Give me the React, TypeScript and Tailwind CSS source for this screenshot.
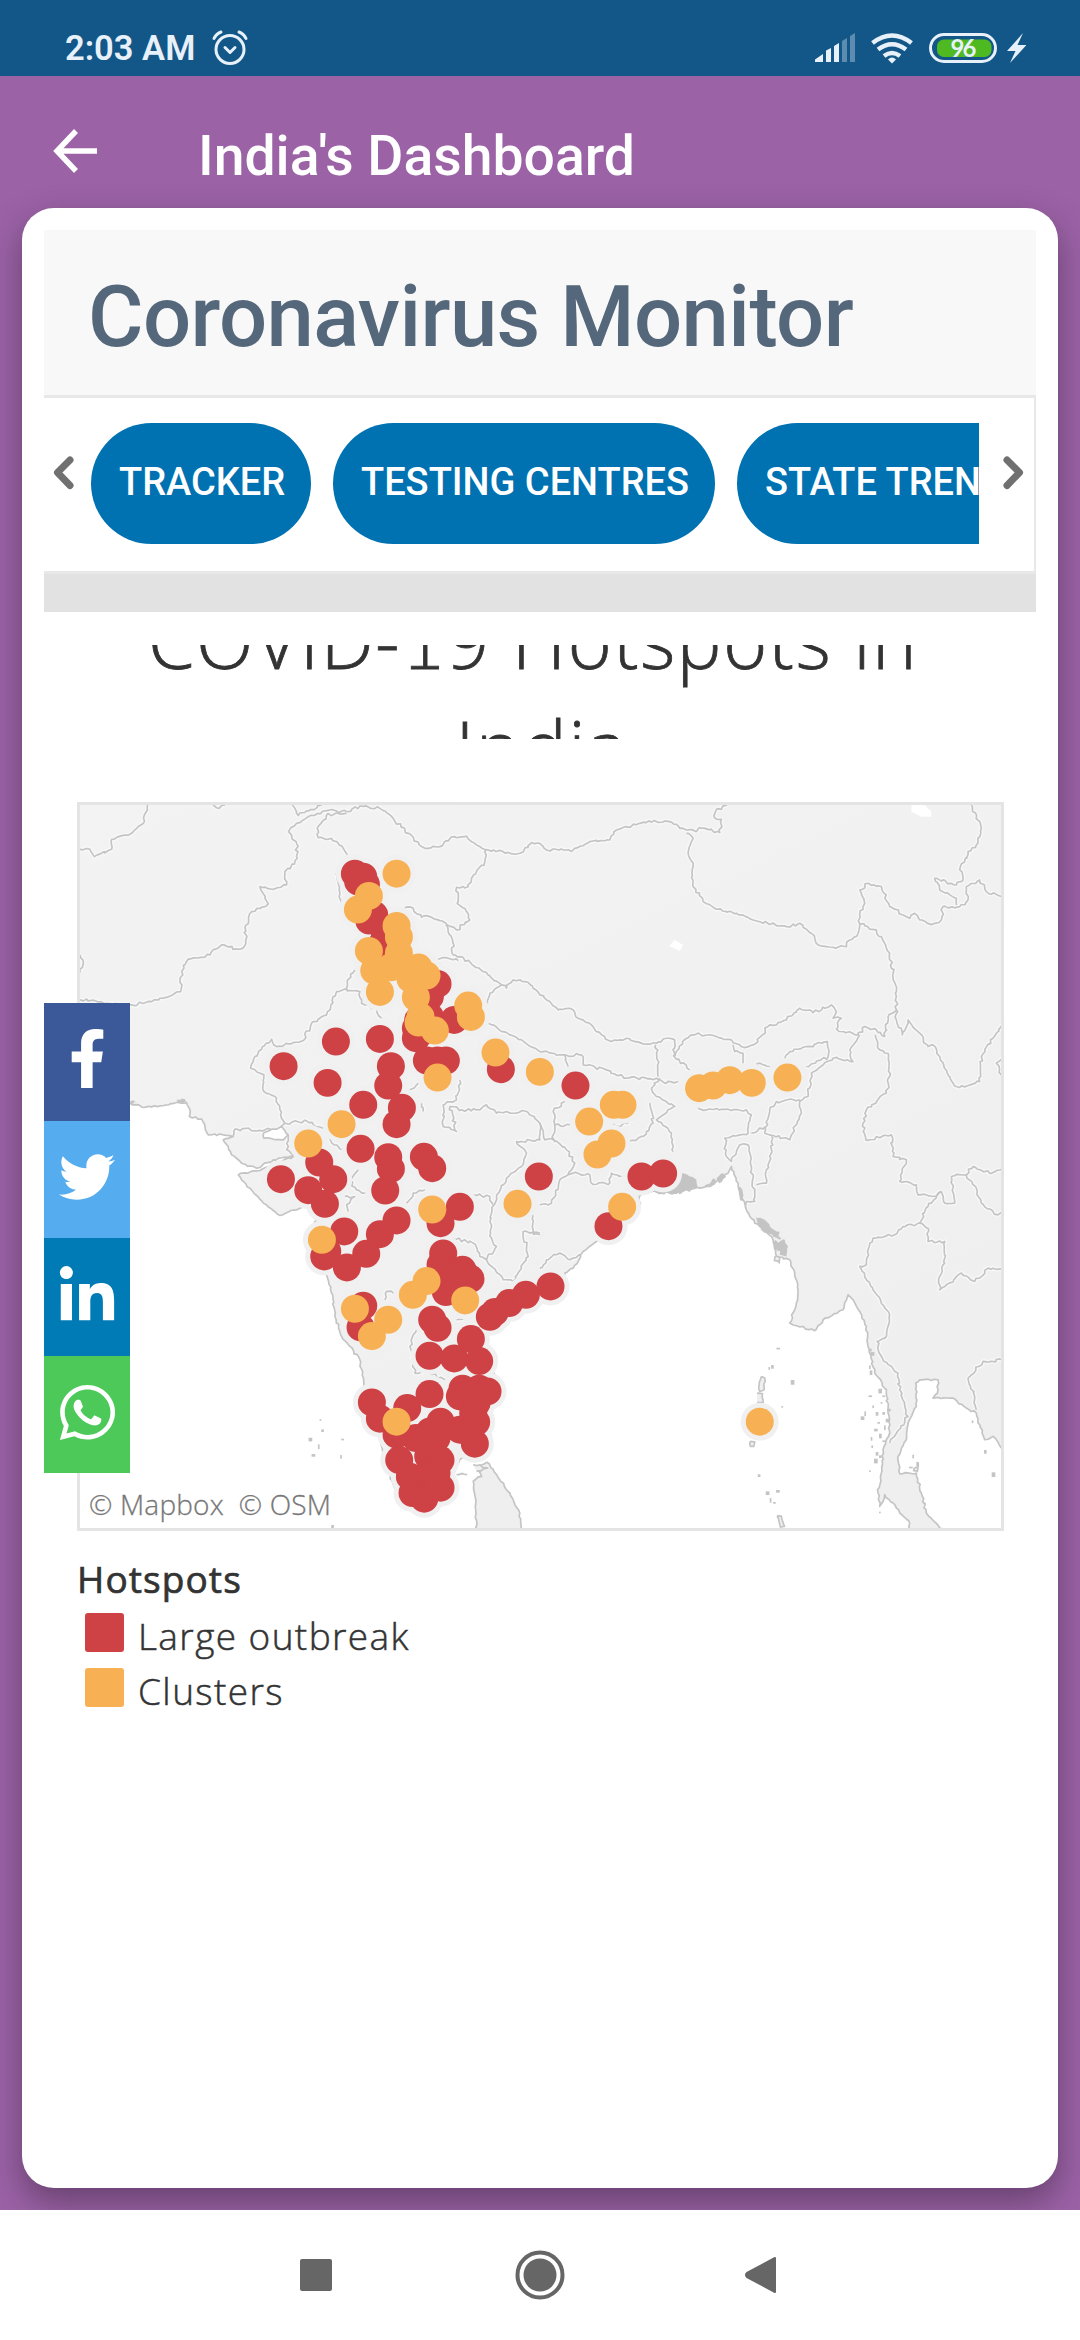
import { FaFacebookF, FaTwitter, FaLinkedinIn, FaWhatsapp } from "react-icons/fa";

type Pt = [number, number];

const parse = (s: string): Pt[] => s.trim().split(/\s+/).map((p) => p.split(",").map(Number) as Pt);

// Deterministic pseudo random numbers, so that the borders stay the same between renders.
const makeRandom = (seed: number) => () => {
  seed = (seed * 1664525 + 1013904223) % 4294967296;
  return seed / 4294967296 - 0.5;
};

// Subdivides a coarse polyline and jitters it, for a natural looking frontier.
const rough = (s: string, amp = 9) => {
  const pts = parse(s);
  const rnd = makeRandom(pts.length * 977 + pts[0][0]);
  let d = `M${pts[0][0]} ${pts[0][1]}`;
  for (let i = 1; i < pts.length; i++) {
    const [ax, ay] = pts[i - 1];
    const [bx, by] = pts[i];
    const n = Math.max(1, Math.round(Math.hypot(bx - ax, by - ay) / 9));
    for (let k = 1; k <= n; k++) {
      const j = k === n ? 0 : amp;
      d += `L${(ax + ((bx - ax) * k) / n + rnd() * j).toFixed(1)} ${(ay + ((by - ay) * k) / n + rnd() * j).toFixed(1)}`;
    }
  }
  return d;
};

const seaMain =
  "40,930 210,940 250,953 300,948 350,938 380,938 388,955 388,980 425,988 435,1010 445,1035 490,1035 520,1040 490,1050 505,1070 515,1095 545,1120 590,1135 640,1110 700,1100 640,1122 600,1142 535,1155 545,1170 570,1195 610,1240 660,1277 720,1255 750,1245 770,1290 740,1330 745,1400 800,1455 815,1510 825,1580 845,1640 870,1670 900,1710 912,1785 890,1840 910,1890 960,1940 975,2010 1005,2100 1030,2140 1090,2160 1160,2140 1180,2100 1180,2050 1200,2010 1270,1990 1290,1960 1290,1870 1325,1800 1300,1740 1290,1700 1275,1640 1340,1600 1400,1560 1440,1535 1475,1530 1512,1480 1515,1450 1540,1435 1570,1385 1610,1355 1690,1340 1700,1300 1740,1250 1740,1205 1790,1205 1850,1210 1870,1190 1920,1195 1950,1190 1970,1175 2005,1150 2015,1130 2035,1180 2045,1220 2070,1280 2100,1310 2140,1350 2150,1400 2190,1410 2205,1450 2215,1500 2210,1540 2190,1600 2210,1608 2265,1623 2290,1590 2350,1560 2365,1515 2380,1530 2400,1565 2420,1610 2425,1670 2445,1750 2480,1800 2485,1870 2490,1930 2470,1980 2465,2050 2455,2110 2460,2150 2475,2115 2500,2140 2520,2170 2550,2200 2550,2240 0,2240";
const seaGulf =
  "2568,1780 2580,1770 2635,1770 2635,1800 2620,1825 2680,1825 2720,1855 2750,1870 2760,1905 2775,1950 2800,1940 2831,1980 2860,1990 2860,2240 2680,2222 2640,2215 2600,2170 2585,2110 2570,2050 2520,2052 2515,2000 2540,1950 2545,1900 2570,1850 2568,1780";
const sriLanka =
  "1280,2017 1320,2070 1350,2110 1380,2170 1385,2240 1250,2240 1248,2130 1240,2075 1265,2060 1250,2030 1280,2017";
const kutch = "612,1028 665,1010 685,1035 670,1050 612,1045 612,1028";

// Frontiers: north-west quarter and centre.
const bordersWest = [
  "60,178 90,178 103,200 155,178 155,148 215,130 250,100 262,45",
  "460,45 478,55 495,45",
  "697,45 715,77 785,45",
  "860,65 800,62 745,80 710,100 686,125 710,160 712,205 675,245 680,285 640,298 600,290 625,342 575,365 555,412 558,460 540,478 485,465 450,495 385,507 365,545 362,605 275,635 215,645 60,630",
  "60,495 70,520 60,548",
  "860,70 800,75 772,115 775,143 815,145 850,175 862,195",
  "828,250 838,300 842,345",
  "860,65 900,48 960,55 1000,85 1045,130 1095,175 1140,170 1185,140 1220,138 1250,165 1285,180 1330,185 1380,190 1415,158 1440,160 1460,180 1540,180 1590,155 1650,150 1670,120 1740,100 1815,93 1880,120 1910,125 1920,113 1980,128 1985,88 1965,84 1967,65 2002,45",
  "1280,180 1275,215 1235,265 1225,290 1190,292 1192,340 1215,355 1230,390 1190,420 1158,400 1110,380 1085,382 1060,355 1035,353",
  "1158,405 1178,450 1180,495 1205,500 1270,545 1325,585 1290,610 1283,640",
  "1135,508 1165,505 1195,512",
  "1325,585 1340,595 1360,570 1395,575 1440,615 1470,635 1495,660 1530,655 1555,685 1595,705 1610,725 1655,755 1700,745 1750,762 1790,760 1830,745 1845,750 1843,800 1890,840",
  "1788,765 1793,810 1795,860",
  "1285,700 1350,735 1440,785 1510,795 1565,795 1570,825 1640,840 1700,865 1790,865 1820,880 1855,875",
  "1515,795 1525,830",
  "885,540 862,575 862,600 830,605 800,675 760,695 730,752 650,770 635,748 585,800 572,835 612,855 612,905 650,925 665,985 675,1000 740,993 790,1015",
  "860,603 900,605 905,640 950,660 965,685",
  "675,1000 650,1020 525,1018 520,1040",
  "685,1035 680,1080 700,1100",
  "1200,870 1190,930 1150,945 1150,1010 1190,1025 1170,950 1205,960 1260,960 1280,945 1310,970 1400,965 1440,1000 1440,1050 1370,1055 1400,1090 1385,1130 1340,1165 1310,1220 1295,1270 1290,1340 1310,1370 1280,1410 1330,1470 1360,1475 1405,1400 1390,1325 1440,1335",
  "1180,1345 1240,1360 1260,1400 1280,1410",
  "1240,1215 1290,1220 1300,1245",
  "1040,1240 1060,1210 1095,1200",
  "975,1530 980,1505 1000,1510",
  "1070,1620 1050,1670 1065,1750 1100,1745 1155,1770",
  "1415,1270 1420,1330 1440,1330",
  "895,1140 870,1170 890,1200 915,1210",
  "855,1220 885,1220 860,1245 865,1265",
  "1050,900 1075,880",
  "1085,940 1090,965",
  "810,1048 845,1080",
  "1190,1590 1210,1588",
];

// Frontiers east of the Bay of Bengal and across Tibet.
const bordersEast = [
  "1840,800 1850,785 1880,745 1910,732 1950,735 2015,750 2045,770 2080,765 2130,705 2180,690 2220,655 2260,668 2315,645 2330,665 2320,685 2345,685 2330,718 2395,735 2415,710 2450,720 2475,740 2485,680 2510,660",
  "2020,765 2025,785 2050,790 2050,820",
  "1880,130 1900,145 1885,190 1900,230 1900,290 1930,335 1970,358 2030,370 2080,390 2180,410 2220,400 2255,430 2275,465 2320,472 2360,470 2370,450 2395,430 2400,402 2400,375 2415,340 2400,300 2425,280 2465,290 2490,350 2550,385 2565,370 2580,390 2620,402 2645,390 2650,350 2700,350 2725,330 2720,290 2760,270 2780,305 2831,318",
  "2735,45 2765,115 2750,165 2725,185 2700,240 2710,270 2690,285 2625,265 2640,300 2690,325 2690,345",
  "2400,402 2450,420 2490,490 2500,550 2510,620 2510,690 2528,735 2545,690 2580,730 2605,770 2620,765 2640,800 2680,880 2700,893 2760,875 2765,800 2800,745 2831,700",
  "2831,800 2810,820 2825,855",
  "2447,735 2460,780 2485,790 2490,860 2480,910 2420,960 2410,1000 2418,1050 2495,1035 2500,1100 2540,1110 2520,1175 2570,1185 2575,1215 2620,1220 2645,1205",
  "2645,1205 2655,1240 2685,1240 2675,1160 2720,1155 2750,1195 2765,1240 2815,1275 2831,1265",
  "2720,1155 2740,1130 2790,1150 2831,1135",
  "2645,1205 2605,1250 2580,1300 2530,1310 2505,1335 2440,1345 2425,1380 2420,1425 2400,1430 2440,1500 2490,1575 2480,1640 2452,1655 2470,1710 2515,1750 2520,1800 2545,1880 2490,1960",
  "2580,1300 2605,1315 2605,1355 2655,1355 2655,1420 2640,1460 2640,1500 2705,1450 2745,1475 2785,1435 2831,1442",
  "2831,1710 2770,1715 2725,1765 2745,1820 2750,1860",
  "2175,805 2190,785 2240,770 2303,755 2305,800 2240,830",
  "2090,822 2130,830",
  "2400,735 2370,780 2380,815 2320,805 2255,850 2245,920 2220,935 2225,970 2190,1050 2130,1035 2115,1030 2130,960 2150,935 2220,930",
  "1915,955 1940,960 2060,960 2075,975 2065,1030 1995,1045 2000,1100 2015,1115 2040,1065 2065,1065 2075,1140 2085,1235 2060,1235 2060,1270",
  "2075,1030 2115,1010",
  "2135,1040 2135,1090 2120,1140 2120,1180 2090,1185",
  "1800,865 1775,895 1790,920 1845,950 1790,990 1835,1030 1840,1085",
  "1770,940 1780,1000 1750,1040 1710,1055",
  "1720,990 1680,1010 1660,1000",
  "1515,935 1480,965 1485,1010 1480,1050 1455,1050 1440,1000",
  "1480,1045 1520,1080 1545,1120 1525,1155",
  "1485,1005 1530,1005",
  "1440,1245 1475,1240 1500,1170 1540,1150 1590,1155 1595,1180 1650,1180 1655,1150 1685,1160",
  "1440,1435 1460,1410 1500,1390 1530,1410 1570,1390",
];

const deltas = [
  "1785,1207 1830,1200 1860,1170 1870,1150 1890,1160 1910,1170 1912,1195 1880,1202 1850,1212 1800,1214",
  "1935,1190 1960,1165 1965,1185",
  "1970,1165 1990,1150 1995,1165 1978,1180",
  "2088,1280 2115,1290 2130,1310 2160,1325 2165,1345 2140,1340 2115,1330 2095,1305",
  "2142,1355 2175,1350 2185,1370 2180,1400 2160,1395 2145,1375",
  "2034,1190 2048,1200 2052,1235 2040,1225",
  "350,930 375,928 380,940 355,940",
  "210,935 228,936 215,945",
];

const islands = [
  "2105,1760 2115,1765 2113,1800 2100,1805 2098,1785 2105,1760",
  "2092,1810 2108,1812 2110,1838 2092,1838",
  "2072,1955 2085,1957 2082,1970 2072,1970 2072,1955",
  "2152,2178 2165,2180 2174,2210 2162,2212 2152,2178",
  "2146,1400 2160,1405 2158,1418 2144,1412 2146,1400",
  "2564,2035 2575,2032 2573,2045 2562,2043 2564,2035",
];

const specks =
  "781,1891 786,1922 748,1947 776,1967 846,1950 757,1996 843,1999 816,2209 2152,1677 2128,1735 2136,1729 2195,1774 2167,1852 2096,2057 2120,2108 2132,2128 2142,2140 2151,2104 2430,1730 2432,1745 2428,1820 2440,1850 2450,1870 2458,1800 2465,1840 2470,1870 2480,1890 2475,1910 2455,1900 2445,1920 2435,1945 2460,1935 2470,1955 2437,1970 2450,1990 2445,2010 2430,2045 2460,2000 2405,1883 2416,1868 2470,1820 2484,1860 2560,1998 2572,2020 2550,2034 2738,1895 2775,1984 2798,2051 2460,2169 2430,1680 2435,1690";

const red =
  "885,251 910,260 918,283 895,275 943,375 928,392 975,440 965,465 1133,582 1110,620 1110,680 1183,690 1075,690 1068,715 1068,745 1100,720 828,755 960,747 671,829 803,879 993,829 985,887 1101,812 1133,812 1158,812 910,945 1026,954 1010,1003 1323,838 902,1077 985,1102 1092,1101 1117,1135 778,1118 663,1168 820,1168 745,1201 795,1242 993,1137 976,1202 1437,1160 1200,1251 1142,1300 1010,1292 960,1333 919,1392 861,1433 853,1325 793,1400 802,1385 1150,1391 1142,1425 1208,1440 1232,1467 1158,1507 1180,1460 910,1548 902,1613 1117,1590 1133,1614 1109,1698 1183,1706 1233,1648 1258,1714 1290,1581 1305,1567 1348,1540 1398,1515 1472,1490 936,1838 960,1887 1042,1855 1109,1813 1208,1797 1200,1820 1258,1797 1283,1805 1250,1840 1240,1870 1249,1897 1200,1920 1245,1962 1230,1930 1142,1896 1110,1925 1068,1945 1010,1935 1130,1945 1018,2011 1105,2000 1142,2011 1050,2061 1109,2050 1130,2050 1058,2110 1093,2127 1142,2094 1745,1160 1810,1151 1646,1309 1547,887";
const orange =
  "1010,251 927,318 894,359 1010,408 1017,441 927,483 1017,490 943,542 993,532 1076,533 1052,567 1100,557 960,606 1068,622 1082,681 1076,698 1125,722 1225,647 1233,681 1307,788 1440,846 1133,863 845,1003 745,1061 1662,945 1688,945 1588,995 1655,1061 1613,1094 1918,895 1960,887 2010,871 2076,879 2183,863 1117,1259 786,1350 1373,1242 1100,1474 1059,1515 1216,1532 885,1557 985,1590 936,1639 1010,1896 1687,1251 2100,1896";

function HotspotMap() {
  const reds = parse(red);
  const oranges = parse(orange);
  const borders = [...bordersWest, ...bordersEast].map((b) => rough(b));
  const seas = [rough(seaMain, 6) + "Z", rough(seaGulf, 6) + "Z", rough(kutch, 6) + "Z"];
  return (
    <svg className="block h-full w-full" viewBox="60 45 2764 2170" preserveAspectRatio="none">
      <defs>
        <linearGradient id="land" x1="0" y1="0" x2="0.6" y2="1">
          <stop offset="0" stopColor="#f3f3f3" />
          <stop offset="1" stopColor="#efefef" />
        </linearGradient>
      </defs>
      <rect x="0" y="0" width="2900" height="2300" fill="url(#land)" />
      <path d="M2555 45h40l20 20v15l-30 0-30-15zM1828 468l17-18 25 15-10 18z" fill="#fff" />
      <g fill="none" strokeLinejoin="round" stroke="#f8f8f8" strokeWidth="13">
        {borders.map((d, i) => <path key={i} d={d} />)}
      </g>
      <g fill="none" strokeLinejoin="round" stroke="#c4c4c4" strokeWidth="5">
        {borders.map((d, i) => <path key={i} d={d} />)}
      </g>
      <g fill="#fff" stroke="#c4c4c4" strokeWidth="5" strokeLinejoin="round">
        {seas.map((d, i) => <path key={i} d={d} />)}
      </g>
      <g fill="#efefef" stroke="#c4c4c4" strokeWidth="5">
        <path d={rough(sriLanka, 6)} />
        {islands.map((s, i) => <path key={i} d={rough(s, 5)} />)}
        <path d={rough("1190,2055 1222,2055", 8)} />
        <path d={rough("1240,2025 1285,2035 1250,2045", 9)} />
      </g>
      <g fill="#c4c4c4">
        {deltas.map((s, i) => <path key={i} d={rough(s, 14) + "Z"} />)}
        {parse(specks).map(([x, y], i) => <rect key={i} x={x - 2} y={y - 3} width={5 + (i % 3) * 3} height={5 + (i % 4) * 3} />)}
      </g>
      <g fill="#f0f0f0">
        {[...reds, ...oranges].map(([x, y], i) => <circle key={i} cx={x} cy={y} r="57" />)}
      </g>
      <g fill="#ce4144">
        {reds.map(([x, y], i) => <circle key={i} cx={x} cy={y} r="42" />)}
      </g>
      <g fill="#f7b154">
        {oranges.map(([x, y], i) => <circle key={i} cx={x} cy={y} r="42" />)}
      </g>
    </svg>
  );
}

function StatusBar() {
  return (
    <div className="flex h-[76px] items-start justify-between bg-[#125787] pr-[54px] pl-[65px] text-[#e8f1fa]">
      <div className="flex items-center pt-[28px]">
        <span className="text-[34.500px] leading-[40px] font-semibold whitespace-nowrap">2:03 AM</span>
        <svg className="ml-[17px] h-[36px] w-[36px]" viewBox="0 0 36 36" fill="none" stroke="currentColor" strokeWidth="3" strokeLinecap="round" strokeLinejoin="round">
          <circle cx="18" cy="19.500" r="14" />
          <path d="M2 8.500Q4 4 9 2M34 8.500Q32 4 27 2" />
          <path d="M13 17.500l5 5 5-5" />
        </svg>
      </div>
      <svg className="mt-[30px] h-[36px] w-[216px]" viewBox="810 30 216 36" fill="currentColor">
        <path d="M815 62v-2.500l8-5.500v8zM826 62v-11.500l5-2.500v14zM834 62v-16l5-3v19z" />
        <path d="M842 62v-21l5-3v24zM850 62v-26l5-3v29z" opacity=".35" />
        <g fill="none" stroke="currentColor" strokeWidth="4.500">
          <path d="M872.500 43Q892 28 911.500 43" />
          <path d="M878 49.500Q892 39 906 49.500" />
          <path d="M884 56Q892 50 900 56" />
        </g>
        <path d="M888 59.500q4-4 8 0l-4 4z" />
        <rect x="930.500" y="34.500" width="65" height="27" rx="13.500" fill="none" stroke="currentColor" strokeWidth="3" />
        <rect x="937" y="39.500" width="54.500" height="17.500" rx="7" fill="#4eb921" />
        <text x="950.500" y="56.500" fontSize="24" fontWeight="700" letterSpacing="-2" fontFamily="Lato, sans-serif">96</text>
        <path d="M1023 33l-16 18h8.500l-5.500 12 16.500-18h-9z" />
      </svg>
    </div>
  );
}

function Arrow({ flip }: { flip?: boolean }) {
  return (
    <svg className={flip ? "h-[37px] w-[24px] -scale-x-100" : "h-[37px] w-[24px]"} viewBox="0 0 24 37" fill="none" stroke="#707070" strokeWidth="7" strokeLinecap="round" strokeLinejoin="round">
      <path d="M18 6L5.500 18.500l12.500 13" />
    </svg>
  );
}

const tabs = [
  { label: "TRACKER", width: "w-[220px]" },
  { label: "TESTING CENTRES", width: "w-[382px]" },
  { label: "STATE TRENDS", width: "w-[310px]" },
];

const shares = [
  { Icon: FaFacebookF, bg: "bg-[#3b5998]", h: "h-[118px]", size: "text-[59px]", pad: "pt-[26px]", name: "Facebook" },
  { Icon: FaTwitter, bg: "bg-[#55acee]", h: "h-[117px]", size: "text-[56px]", pad: "pt-[28px]", name: "Twitter" },
  { Icon: FaLinkedinIn, bg: "bg-[#007bb5]", h: "h-[118px]", size: "text-[62px]", pad: "pt-[28px]", name: "LinkedIn" },
  { Icon: FaWhatsapp, bg: "bg-[#4dc959]", h: "h-[117px]", size: "text-[63px]", pad: "pt-[25px]", name: "WhatsApp" },
];

export default function App() {
  return (
    <div className="flex h-[2340px] w-[1080px] flex-col overflow-hidden bg-white font-['Roboto',sans-serif]">
      <StatusBar />
      <div className="h-[2134px] overflow-hidden bg-[#9b62a6] px-[22px]">
        <header className="flex h-[132px] items-start text-white">
          <svg className="mt-[53px] ml-[31px] h-[44px] w-[44px]" viewBox="0 0 44 44" fill="none" stroke="currentColor" strokeWidth="5.500">
            <path d="M23 2L4 22l19 20M4 22h40" />
          </svg>
          <h1 className="mt-[49px] ml-[101px] text-[55.300px] leading-[64px] font-medium whitespace-nowrap">India&apos;s Dashboard</h1>
        </header>
        <main className="h-[1980px] rounded-[32px] bg-white px-[22px] pt-[22px] shadow-[0_14px_34px_rgba(0,0,0,0.34)]">
          <div className="h-[168px] border-b-3 border-[#e8e8e8] bg-[#f8f8f8] pt-[37px] pl-[44px]">
            <h2 className="text-[85px] leading-[100px] font-medium tracking-[-0.600px] whitespace-nowrap text-[#55677b]">Coronavirus Monitor</h2>
          </div>
          <nav className="flex h-[176px] border-r-2 border-b-3 border-[#e8e8e8] pt-[25px]">
            <div className="w-[47px] pt-[31px] pl-[8px]"><Arrow /></div>
            <div className="flex w-[888px] gap-[22px] overflow-hidden">
              {tabs.map((t) => (
                <div key={t.label} className={`${t.width} h-[121px] shrink-0 rounded-full bg-[#0072b1] pl-[28px] text-[38px] leading-[118px] font-medium whitespace-nowrap text-white`}>
                  {t.label}
                </div>
              ))}
            </div>
            <div className="pt-[31px] pl-[22px]"><Arrow flip /></div>
          </nav>
          <div className="h-[38px] bg-[#e2e2e2]" />
          <div className="mt-[33px] h-[94px] overflow-hidden text-center font-['Open_Sans',sans-serif] text-[75px] font-light text-[#333] [-webkit-text-stroke:0.8px_#333]">
            <div className="-mt-[58px] ml-[-14px] leading-[107px] tracking-[1.700px] whitespace-nowrap">
              COVID-<span className="font-['Lato',sans-serif]">1</span>9 Hotspots in<br /><span className="pl-[18px]">India</span>
            </div>
          </div>
          <section className="relative mt-[63px]">
            <div className="relative ml-[33px] h-[729px] w-[927px] border-3 border-[#e4e4e4]">
              <HotspotMap />
              <div className="absolute bottom-[2px] left-[9px] font-['Open_Sans',sans-serif] text-[28px] leading-[44px] font-light tracking-[0.200px] whitespace-pre text-[#777] [-webkit-text-stroke:0.3px_#777]">© Mapbox  © OSM</div>
            </div>
            <div className="absolute top-[201px] left-0 w-[86px] text-white">
              {shares.map(({ Icon, bg, h, size, pad, name }) => (
                <a key={name} aria-label={name} className={`flex ${h} ${bg} ${size} ${pad} items-start justify-center`}>
                  <Icon />
                </a>
              ))}
            </div>
          </section>
          <section className="mt-[24px] ml-[33px] font-['Open_Sans',sans-serif] text-[#333]">
            <h3 className="text-[37px] leading-[48px] font-normal tracking-[1.100px] [-webkit-text-stroke:0.7px_#333]">Hotspots</h3>
            <div className="mt-[2px] flex h-[55px] items-center">
              <span className="ml-[8px] h-[39px] w-[39px] rounded-[3px] bg-[#ce4144]" />
              <span className="mt-[6px] ml-[14px] text-[37px] leading-[50px] font-light tracking-[1.400px] [-webkit-text-stroke:0.5px_#333]">Large outbreak</span>
            </div>
            <div className="flex h-[55px] items-center">
              <span className="ml-[8px] h-[39px] w-[39px] rounded-[3px] bg-[#f7b154]" />
              <span className="mt-[6px] ml-[14px] text-[37px] leading-[50px] font-light tracking-[1.400px] [-webkit-text-stroke:0.5px_#333]">Clusters</span>
            </div>
          </section>
        </main>
      </div>
      <footer className="flex h-[130px] items-start bg-white pl-[300px]">
        <svg className="mt-[40px] h-[50px] w-[476px]" viewBox="300 2250 476 50" fill="#666">
          <rect x="300" y="2259" width="32" height="32" rx="2" />
          <circle cx="540" cy="2275" r="22.500" fill="none" stroke="#666" strokeWidth="4" />
          <circle cx="540" cy="2275" r="16.500" />
          <path d="M775 2258v34l-28-15q-2-2 0-4z" stroke="#666" strokeWidth="2" strokeLinejoin="round" />
        </svg>
      </footer>
    </div>
  );
}
